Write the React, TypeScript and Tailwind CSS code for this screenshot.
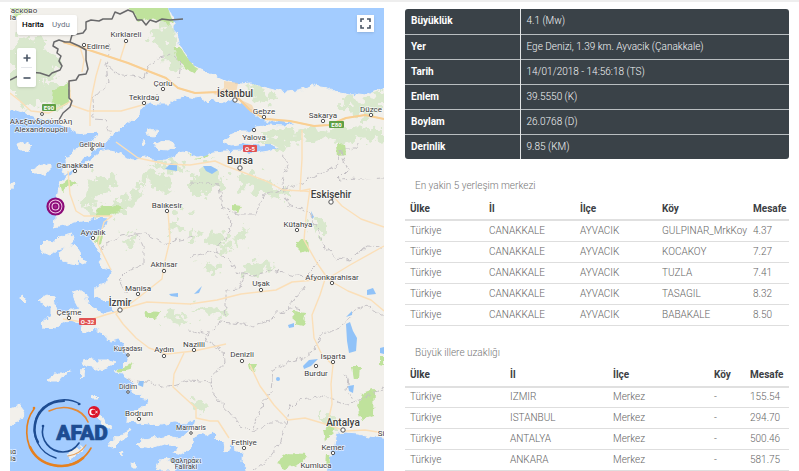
import React from "react";

type City = { name: string; x: number; y: number; cx: number; cy: number; size?: number };

const cities: City[] = [
  { name: "Kırklareli", x: 126, y: 37, cx: 126, cy: 41 },
  { name: "Edirne", x: 98, y: 49, cx: 84, cy: 45 },
  { name: "Çorlu", x: 163, y: 86, cx: 163, cy: 89 },
  { name: "Tekirdağ", x: 144, y: 100, cx: 144, cy: 103 },
  { name: "İstanbul", x: 235, y: 97, cx: 235, cy: 100, size: 10 },
  { name: "Gebze", x: 264, y: 114, cx: 264, cy: 117 },
  { name: "Sakarya", x: 323, y: 118, cx: 323, cy: 121 },
  { name: "Düzce", x: 371, y: 112, cx: 371, cy: 115 },
  { name: "Yalova", x: 254, y: 140, cx: 254, cy: 130 },
  { name: "Gelibolu", x: 92, y: 147, cx: 92, cy: 149, size: 7 },
  { name: "Canakkale", x: 75, y: 168, cx: 75, cy: 171 },
  { name: "Bursa", x: 240, y: 164, cx: 240, cy: 168, size: 10 },
  { name: "Balıkesir", x: 167, y: 208, cx: 167, cy: 211 },
  { name: "Eskişehir", x: 331, y: 198, cx: 331, cy: 202, size: 10 },
  { name: "Kütahya", x: 298, y: 227, cx: 297, cy: 230 },
  { name: "Ayvalık", x: 93, y: 235, cx: 93, cy: 238 },
  { name: "Akhisar", x: 164, y: 267, cx: 164, cy: 271 },
  { name: "Manisa", x: 138, y: 291, cx: 138, cy: 294 },
  { name: "İzmir", x: 120, y: 306, cx: 120, cy: 310, size: 10 },
  { name: "Uşak", x: 261, y: 286, cx: 261, cy: 290 },
  { name: "Afyonkarahisar", x: 332, y: 280, cx: 332, cy: 283 },
  { name: "Çeşme", x: 69, y: 315, cx: 69, cy: 318 },
  { name: "Kuşadası", x: 128, y: 351, cx: 128, cy: 355, size: 7 },
  { name: "Aydın", x: 164, y: 352, cx: 164, cy: 356 },
  { name: "Nazilli", x: 194, y: 347, cx: 194, cy: 350 },
  { name: "Denizli", x: 242, y: 357, cx: 242, cy: 361 },
  { name: "Isparta", x: 333, y: 359, cx: 333, cy: 362 },
  { name: "Burdur", x: 316, y: 376, cx: 316, cy: 366 },
  { name: "Didim", x: 128, y: 389, cx: 128, cy: 392, size: 7 },
  { name: "Bodrum", x: 139, y: 416, cx: 139, cy: 419 },
  { name: "Marmaris", x: 191, y: 430, cx: 191, cy: 433, size: 7 },
  { name: "Antalya", x: 343, y: 426, cx: 343, cy: 430, size: 10 },
  { name: "Fethiye", x: 244, y: 445, cx: 244, cy: 448, size: 8 },
  { name: "Kemer", x: 333, y: 450, cx: 333, cy: 453, size: 8 },
];

// Coastlines, one closed outline for each land mass
const land = [
  "0,0 168,0 168,8 171,17 174,22 174,31 178,38 180,46 184,53 189,60 195,67 201,70 210,74 218,78 227,82 233,83 241,84 250,83 262,87 274,90 286,92 298,91 306,89 312,86 316,84 320,87 327,88 333,91 341,93 350,95 358,94 367,95 374,92 384,88 394,86 394,440 384,438 370,436 358,433 345,432 338,433 335,439 333,449 329,456 330,463 325,480 247,480 245,464 241,460 242,452 235,450 232,443 230,449 225,452 223,444 217,438 213,431 207,436 200,434 193,438 190,449 181,455 173,453 177,446 164,444 151,448 137,446 141,441 153,438 165,436 177,439 186,434 194,427 196,420 186,423 174,422 162,425 150,424 139,423 127,422 128,412 138,410 146,405 149,400 141,398 143,394 133,393 129,388 134,384 128,380 123,373 114,372 123,367 129,361 126,353 124,345 119,339 111,341 103,337 98,329 94,326 90,333 84,331 82,324 70,321 58,326 52,329 44,328 43,322 50,317 50,309 45,305 39,300 47,296 54,299 58,310 66,313 72,309 79,308 75,302 73,292 79,290 85,294 87,302 94,309 106,313 114,311 111,306 104,299 95,296 96,287 105,284 109,278 112,270 103,268 99,262 103,257 98,250 93,242 91,237 98,232 106,225 108,218 100,217 87,220 76,222 65,225 54,227 55,217 58,208 57,198 59,188 61,181 67,176 74,172 78,168 86,163 92,158 99,152 108,150 117,151 123,156 133,160 145,157 155,161 166,160 174,156 176,153 184,151 191,154 191,158 200,158 213,153 225,152 239,151 255,153 268,151 279,148 272,144 257,145 244,143 231,145 223,141 230,135 240,131 250,131 257,127 268,125 284,126 296,123 285,121 269,121 260,118 253,112 246,106 239,103 235,100 233,98 225,103 216,102 213,98 208,103 203,97 195,98 186,96 176,98 168,104 158,104 149,102 142,107 139,114 133,120 126,125 120,131 111,136 106,142 101,146 92,151 85,156 79,163 72,169 66,174 62,172 68,161 64,158 75,151 83,145 92,141 99,136 96,132 85,134 76,133 69,129 61,123 49,120 37,118 25,113 10,108 0,108",
  "30,170 38,166 43,163 50,166 50,172 41,174 34,174",
  "17,144 24,142 31,145 29,150 20,151",
  "10,184 14,182 13,188 10,191",
  "146,131 151,129 157,132 154,136 147,135",
  "154,144 162,141 169,142 175,146 169,150 158,149",
  "142,142 145,141 146,144 143,145",
  "40,247 46,241 55,242 60,237 72,234 74,240 71,245 78,249 83,257 86,263 81,265 78,257 77,264 70,263 62,260 59,252 66,247 57,249 50,255 43,252",
  "83,361 92,359 98,360 107,360 115,363 108,367 101,370 93,367 86,366",
  "48,379 54,374 62,374 71,369 66,376 57,381 49,381",
  "10,409 20,406 24,411 19,420 12,425 10,424",
  "109,446 115,438 125,433 132,430 127,437 118,441 112,447",
  "90,396 96,395 99,398 92,398",
  "67,455 75,450 82,446 79,453 70,459",
  "97,412 103,417 107,424 112,427 106,428 99,419",
  "157,469 159,460 166,458 173,464 177,471 156,471",
  "130,463 136,466 138,469 133,469",
  "22,296 25,298 24,302 21,299",
  "119,452 124,453 122,457",
  "81,370 84,368 83,376 80,379",
];

const woods = [
  "125,4 150,4 168,8 174,20 168,25 151,18 139,22 132,12",
  "172,48 181,48 188,57 197,67 196,74 185,68 179,61",
  "53,89 68,83 69,104 60,107 52,99",
  "10,4 36,4 25,13 14,17",
  "78,184 68,186 61,192 59,184 66,180",
  "96,210 103,205 112,207 119,204 122,210 110,216 97,216",
  "97,232 104,234 102,246 94,242",
  "297,241 308,240 309,250 302,253 296,247",
  "336,144 345,143 346,155 337,156",
  "362,393 374,389 373,415 361,419 357,408",
  "352,367 360,367 359,377 354,379",
  "380,356 384,356 384,366 380,365",
  "276,463 288,454 307,455 302,462 286,469",
  "323,430 336,420 333,434 325,441",
  "232,205 242,206 237,213 232,210",
  "293,311 306,313 303,325 294,323",
  "115,369 127,366 133,362 129,370 118,373",
  "144,311 160,312 156,319 146,318",
  "326,454 333,454 331,467 325,466",
  "188,152 196,153 212,153 202,159 190,158",
  "249,363 257,363 255,371 250,369",
];

const hills = [
  "16,36 42,40 58,60 57,74 48,76 40,96 28,107 10,90 10,60",
  "22,90 52,84 66,90 62,108 40,104",
  "85,189 93,174 106,177 116,182 112,192 98,195 91,204 82,204",
  "86,205 99,207 110,202 125,200 138,187 145,193 133,205 115,212 98,217 87,214",
  "138,177 154,168 166,174 172,188 163,195 152,184 138,187",
  "190,180 204,169 216,164 224,175 219,186 206,196 190,193",
  "240,180 255,170 267,181 281,190 294,190 280,198 258,192 244,190",
  "245,84 267,90 278,96 265,103 251,101",
  "338,96 350,95 360,101 373,96 384,88 384,110 364,118 344,110",
  "258,139 277,132 303,129 324,132 351,127 384,130 384,142 360,139 337,142 315,139 300,144 278,147",
  "205,240 218,231 229,238 226,251 212,249",
  "190,232 200,234 198,240 190,240",
  "236,233 247,230 244,244 237,253",
  "310,217 321,216 328,223 320,237 315,234",
  "242,272 257,261 275,265 267,271 247,276",
  "150,37 169,20 174,31 180,51 177,71 165,65 164,49",
  "192,309 210,306 230,310 219,316 198,314",
  "319,414 333,414 341,426 328,430",
  "191,397 206,404 203,415 194,411",
  "164,315 174,309 185,317 173,326",
  "120,240 136,232 140,238 124,246",
  "176,205 186,200 188,210 180,214",
  "148,158 178,160 186,170 176,176 164,166",
  "200,265 216,262 220,270 206,272",
  "170,225 180,222 182,230 172,232",
];

const provinceLines = [
  "108,44 110,54 107,65 117,74 145,78 148,66 158,58 172,55 181,63 179,77",
  "106,63 108,83 93,99 94,119 106,120 110,134",
  "190,183 219,185 222,207 237,215 255,215 264,194 281,190 300,184 315,176 336,166 340,150 356,150 357,142",
  "340,150 348,170 338,180 384,178",
  "99,250 120,236 146,233 164,244 181,239 195,237",
  "138,235 143,246 143,264 127,272 119,280 127,294",
  "190,257 213,251 229,258 235,272 253,276 272,270 291,275 304,277 321,260",
  "226,215 233,223 226,238 217,247 217,256",
  "245,276 239,289 226,290 226,306 224,315",
  "283,189 288,205 308,211 313,221 320,234 323,246 337,258 350,260 367,246 384,247",
  "305,286 294,300 286,312 279,313 291,307 302,309",
  "190,330 206,335 220,323 244,325 253,327 276,317 276,311",
  "384,317 366,305 354,311 341,328 323,334 315,349 303,358 289,362 273,370 271,391 260,410 252,431 240,426 229,412 213,394 210,379 225,362 224,350 202,337",
  "292,407 299,400 318,396 333,399 348,405 357,401 384,388",
  "286,422 282,441 269,458 253,471",
  "253,431 271,422 286,422 289,413 292,404",
  "127,380 147,382 167,387 190,380 210,382",
  "342,374 349,378 347,391 352,400",
  "283,155 288,165 282,180 283,190",
];

const majorRoads = [
  "63,42 80,47 107,56 128,63 148,71 166,78 178,88 195,93 218,92 236,96 251,111 266,119 290,121 314,126 329,125 346,118 365,115 384,119",
  "69,80 71,105 88,111 121,111 146,104",
  "10,93 20,101 31,111 49,113 64,105 73,100",
  "101,59 96,76 92,95 90,109 90,126",
  "126,41 120,60",
  "80,47 84,60 82,72",
  "116,142 138,158 166,164 190,165 215,161 226,166 245,173 266,181 283,190 304,191 331,194 342,206 361,219 384,227",
  "68,171 70,194 76,211 84,216 112,216 104,222 98,244 111,270",
  "168,211 170,240 164,265 162,279 138,298 116,314 123,324 136,338 149,348 167,354 194,351 226,344",
  "119,310 147,302 190,304 217,300 241,294 276,290 292,282 327,279 348,291 371,300 384,311",
  "327,279 350,265 384,246",
  "300,191 310,189 306,217 304,240 317,263 326,276 320,295 312,315 314,338 322,355 333,365 331,384 332,404 328,422",
  "250,365 260,386 274,405 288,420 305,418 322,423 346,431 365,430 384,433",
  "184,353 174,374 173,387 185,398 196,408 196,418 210,421 218,421 229,438",
  "63,319 83,322 105,315 119,311",
  "302,130 302,159 300,190",
];

const places5 = [
  ["GULPINAR_MrkKoy", "4.37"],
  ["KOCAKOY", "7.27"],
  ["TUZLA", "7.41"],
  ["TASAGIL", "8.32"],
  ["BABAKALE", "8.50"],
].map(([village, km]) => ["Türkiye", "CANAKKALE", "AYVACIK", village, km]);

const bigCities = [
  ["IZMIR", "155.54"],
  ["ISTANBUL", "294.70"],
  ["ANTALYA", "500.46"],
  ["ANKARA", "581.75"],
].map(([city, km]) => ["Türkiye", city, "Merkez", "-", km]);

const details = [
  ["Büyüklük", "4.1 (Mw)"],
  ["Yer", "Ege Denizi, 1.39 km. Ayvacik (Çanakkale)"],
  ["Tarih", "14/01/2018 - 14:56:18 (TS)"],
  ["Enlem", "39.5550 (K)"],
  ["Boylam", "26.0768 (D)"],
  ["Derinlik", "9.85 (KM)"],
];

function RoadSign({ x, y, w, label, color }: { x: number; y: number; w: number; label: string; color: string }) {
  return (
    <g>
      <rect x={x} y={y} width={w} height="7" rx="1" fill={color} />
      <text x={x + w / 2} y={y + 6} fontSize="6" fontWeight="700" fill="#fff" textAnchor="middle">
        {label}
      </text>
    </g>
  );
}

function AfadLogo() {
  return (
    <g>
      <g fill="none" strokeLinecap="round">
        <path d="M34 409C24 422 24 444 36 456C52 472 80 468 91 448" stroke="#e5801f" strokeWidth="1.6" />
        <path d="M30 447C39 467 67 472 83 458" stroke="#e5801f" strokeWidth="2.6" />
        <path d="M49 411C64 404 82 408 88 422" stroke="#e58a36" strokeWidth="1.6" />
        <path d="M68 456C76 455 82 451 86 445" stroke="#e5a05c" strokeWidth="1.2" />
        <path d="M80 404C64 395 43 401 36 418C30 435 39 453 56 458" stroke="#1d4c92" strokeWidth="1.4" />
        <path d="M64 401C49 401 37 411 35 425C34 432 35 437 38 442" stroke="#1d4c92" strokeWidth="2.2" />
        <path d="M43 427C40 440 50 452 63 452C70 452 75 449 79 443" stroke="#1d4c92" strokeWidth="1.6" />
      </g>
      <circle cx="43" cy="426" r="1.3" fill="#1d4c92" />
      <circle cx="79" cy="404" r="1.3" fill="#1d4c92" />
      <circle cx="34" cy="408" r="1.3" fill="#e5801f" />
      <text
        x="82"
        y="440"
        fontSize="21"
        fontWeight="900"
        textAnchor="middle"
        fill="#1d4c92"
        stroke="#1d4c92"
        strokeWidth="0.7"
      >
        AFAD
      </text>
      <circle cx="94" cy="412" r="6" fill="#dc1529" />
      <circle cx="92.5" cy="412" r="3.2" fill="#fff" />
      <circle cx="93.5" cy="412" r="2.4" fill="#dc1529" />
      <path d="M95 412L98 410.6L97 412L98 413.4Z" fill="#fff" />
    </g>
  );
}

function MapCanvas() {
  return (
    <svg viewBox="10 8 374 463" className="block w-full font-[Roboto,sans-serif]" role="img" aria-label="Harita">
      <defs>
        {/* Roughens outlines so coasts and vegetation look natural */}
        <filter id="coast" x="0" y="0" width="394" height="480" filterUnits="userSpaceOnUse" colorInterpolationFilters="sRGB">
          <feTurbulence type="fractalNoise" baseFrequency="0.15" numOctaves="2" seed="4" />
          <feDisplacementMap in="SourceGraphic" scale="7" xChannelSelector="R" yChannelSelector="G" />
        </filter>
        <filter id="ragged" x="0" y="0" width="394" height="480" filterUnits="userSpaceOnUse" colorInterpolationFilters="sRGB">
          <feTurbulence type="fractalNoise" baseFrequency="0.11" numOctaves="3" seed="9" />
          <feDisplacementMap in="SourceGraphic" scale="26" xChannelSelector="R" yChannelSelector="G" />
        </filter>
        <clipPath id="shore">
          <polygon points={land[0]} />
        </clipPath>
      </defs>
      <rect x="10" y="8" width="374" height="463" fill="#a3ccff" />
      <g filter="url(#coast)" fill="#f2f0eb" stroke="#f2f0eb" strokeWidth="1" strokeLinejoin="round">
        {land.map((p) => (
          <polygon key={p} points={p} />
        ))}
      </g>
      <g clipPath="url(#shore)">
        <g filter="url(#ragged)" fill="#d3e6c6" opacity="0.8">
          {hills.map((p) => (
            <polygon key={p} points={p} />
          ))}
        </g>
        <g filter="url(#coast)" fill="#bfe29c">
          {woods.map((p) => (
            <polygon key={p} points={p} />
          ))}
        </g>
      </g>
      <g fill="#90c2f8">
        <path d="M165 169L171 163L177 165L177 171Z" />
        <path d="M203 166L211 166L218 170L212 174L206 171Z" />
        <path d="M346 324L350 322L353 331L357 338L356 351L349 353L347 341Z" />
        <path d="M303 366L309 360L318 359L311 366L304 369Z" />
        <path d="M367 290L373 288L376 294L367 295Z" />
        <path d="M348 386L354 385L353 393L349 391Z" />
        <path d="M288 325L294 323L294 327L289 328Z" />
        <circle cx="278" cy="379" r="2" />
        <path d="M169 294L178 293L178 297L171 296Z" />
        <path d="M194 294L202 286L199 293Z" />
        <path d="M139 381L144 381L143 387L138 385Z" />
        <path d="M380 348L384 347L384 354L380 353Z" />
        <path d="M311 211L314 217L312 219Z" />
        <path d="M346 317L352 311L352 315Z" />
      </g>
      <g filter="url(#coast)">
        <g fill="none" stroke="#c4c0c4" strokeWidth="1" strokeDasharray="6 2">
          {provinceLines.map((p) => (
            <polyline key={p} points={p} />
          ))}
        </g>
      </g>
      <g fill="none" stroke="#fbdfb8" strokeWidth="1.4" strokeLinejoin="round">
        {majorRoads.map((p) => (
          <polyline key={p} points={p} />
        ))}
      </g>
      <polyline points={majorRoads[0]} fill="none" stroke="#f9cf93" strokeWidth="2" strokeLinejoin="round" />
      <g fill="#f6cf9c" opacity="0.6">
        <path d="M224 81L238 83L236 93L225 97L213 94L224 88Z" />
        <path d="M239 99L252 105L256 114L247 109Z" />
      </g>
      <g fill="none" stroke="#69696b" strokeWidth="1.5" strokeLinejoin="round">
        <polyline points="10,80 18,76 28,72 40,73 49,76 52,73 60,70 62,66 59,61 61,56 57,53 58,49 53,46 54,42 59,40 65,42 70,42 72,35 83,33 86,29 86,22 91,20 99,21 103,19 112,19 115,12 120,14 128,10 133,12 137,20 142,20 146,25 150,20 156,22 162,19 170,20 183,19" />
        <polyline points="70,42 79,46 86,50 86,60 88,69 86,74 79,75 76,80 69,81 69,98 72,101 70,107 63,113 59,120" />
      </g>
      <RoadSign x={42} y={104} w={14} label="E90" color="#5f9f45" />
      <RoadSign x={329} y={121} w={15} label="E80" color="#5f9f45" />
      <RoadSign x={243} y={145} w={14} label="O-5" color="#e05252" />
      <RoadSign x={79} y={318} w={17} label="O-32" color="#e05252" />
      <g stroke="#fff" strokeWidth="1.5" strokeOpacity="0.75" paintOrder="stroke" fill="#3f3f3f" textAnchor="middle" strokeLinejoin="round">
        {cities.map((c) => (
          <text
            key={c.name}
            x={c.x}
            y={c.y}
            fontSize={c.size ?? 8}
            fontWeight={c.size === 10 ? 500 : 400}
          >
            {c.name}
          </text>
        ))}
        <g fontSize="8">
          <text x="41" y="124">Αλεξανδρούπολη</text>
          <text x="41" y="132">Alexandroupoli</text>
          <text x="24" y="13">асково</text>
          <text x="13" y="20">la</text>
          <text x="316" y="468">Kumluca</text>
          <text x="381" y="436">Si</text>
        </g>
        <g fontSize="7">
          <text x="186" y="463">Φαληράκι</text>
          <text x="186" y="469">Faliraki</text>
          <text x="13" y="454">ια</text>
          <text x="13" y="461">ia</text>
        </g>
      </g>
      <g fill="#fff" stroke="#555" strokeWidth="1">
        {cities.map((c) => (
          <circle key={c.name} cx={c.cx} cy={c.cy} r={c.size === 10 ? 2.2 : c.size === 7 ? 1.3 : 1.7} />
        ))}
        <circle cx="42" cy="114" r="1.5" />
      </g>
      <g fill="none" stroke="#8b0a78">
        <circle cx="55.5" cy="206.5" r="8" fill="#f3cbea" strokeWidth="2.2" />
        <circle cx="55.5" cy="206.5" r="5" strokeWidth="2" />
        <circle cx="55.5" cy="206.5" r="2.2" fill="#a5268f" strokeWidth="1.4" />
      </g>
      <AfadLogo />
    </svg>
  );
}

function MapPanel() {
  return (
    <section className="relative overflow-hidden">
      <MapCanvas />
      <div className="absolute left-[7px] top-[7px] flex h-5 overflow-hidden rounded-xs bg-white text-[8px] shadow-sm">
        <button className="w-7 pl-1 text-center font-medium text-black">Harita</button>
        <button className="w-8 text-center text-gray-500">Uydu</button>
      </div>
      <div className="absolute left-[7px] top-10 flex w-[19px] flex-col rounded-xs bg-white text-gray-600 shadow-sm">
        <button aria-label="Yakınlaştır" className="grid h-[19px] place-items-center">
          <svg viewBox="0 0 8 8" className="size-2" stroke="currentColor" strokeWidth="1.6">
            <path d="M4 0.5V7.5M0.5 4H7.5" />
          </svg>
        </button>
        <span className="mx-1 h-px bg-gray-200" />
        <button aria-label="Uzaklaştır" className="grid h-[19px] place-items-center">
          <svg viewBox="0 0 8 8" className="size-2" stroke="currentColor" strokeWidth="1.6">
            <path d="M0.5 4H7.5" />
          </svg>
        </button>
      </div>
      <button
        aria-label="Tam ekran"
        className="absolute right-[10px] top-[7px] grid size-[17px] place-items-center bg-white text-gray-600 shadow-sm"
      >
        <svg viewBox="0 0 11 11" className="size-[11px]" fill="none" stroke="currentColor" strokeWidth="1.6">
          <path d="M1 4V1H4M7 1H10V4M10 7V10H7M4 10H1V7" />
        </svg>
      </button>
    </section>
  );
}

function DistanceTable({ title, rows, widths }: { title: string; rows: string[][]; widths: string[] }) {
  return (
    <table className="w-full table-fixed border-collapse text-left text-[10px] leading-[14px] text-[#666]">
      <caption className="px-[10px] pt-[20px] pb-[5px] text-left font-light text-[#777]">{title}</caption>
      <colgroup>
        {widths.map((w, i) => (
          <col key={i} className={w} />
        ))}
      </colgroup>
      <thead>
        <tr className="h-[22px] border-b-2 border-[#e0e0e0] text-[#3c4044]">
          {["Ülke", "İl", "İlçe", "Köy", "Mesafe"].map((h) => (
            <th key={h} scope="col" className="pl-[5px] font-bold">
              {h}
            </th>
          ))}
        </tr>
      </thead>
      <tbody>
        {rows.map((row) => (
          <tr key={row.join()} className="h-[21px] border-b border-[#dedede]">
            {row.map((cell, i) => (
              <td key={i} className="whitespace-nowrap pl-[5px] font-light">
                {cell}
              </td>
            ))}
          </tr>
        ))}
      </tbody>
    </table>
  );
}

export default function App() {
  return (
    <div className="h-screen overflow-hidden bg-white font-[Roboto,sans-serif]">
      <div className="h-[2px] bg-[#eeeeee]" />
      <main className="grid grid-cols-[374fr_384fr] items-start gap-[21px] px-[10px] pt-[6px]">
        <MapPanel />
        <section className="pt-px">
          <div className="overflow-hidden rounded-[3px] bg-[#3a4248]">
            <table className="w-full table-fixed border-collapse text-left text-[10px] leading-[14px] text-[#f4f5f6]">
              <tbody>
                {details.map(([label, value]) => (
                  <tr key={label} className="h-[25px] border-b border-[#b9bec1] last:border-b-0">
                    <th scope="row" className="w-[115px] border-r border-[#e3e5e6] pl-[6px] font-bold text-white">
                      {label}
                    </th>
                    <td className="pl-[6px] font-light">{value}</td>
                  </tr>
                ))}
              </tbody>
            </table>
          </div>
          <DistanceTable
            title="En yakin 5 yerleşim merkezi"
            rows={places5}
            widths={["w-[79px]", "w-[91px]", "w-[82px]", "w-[91px]", "w-auto"]}
          />
          <DistanceTable
            title="Büyük illere uzaklığı"
            rows={bigCities}
            widths={["w-[100px]", "w-[103px]", "w-[101px]", "w-[36px]", "w-auto"]}
          />
        </section>
      </main>
    </div>
  );
}
